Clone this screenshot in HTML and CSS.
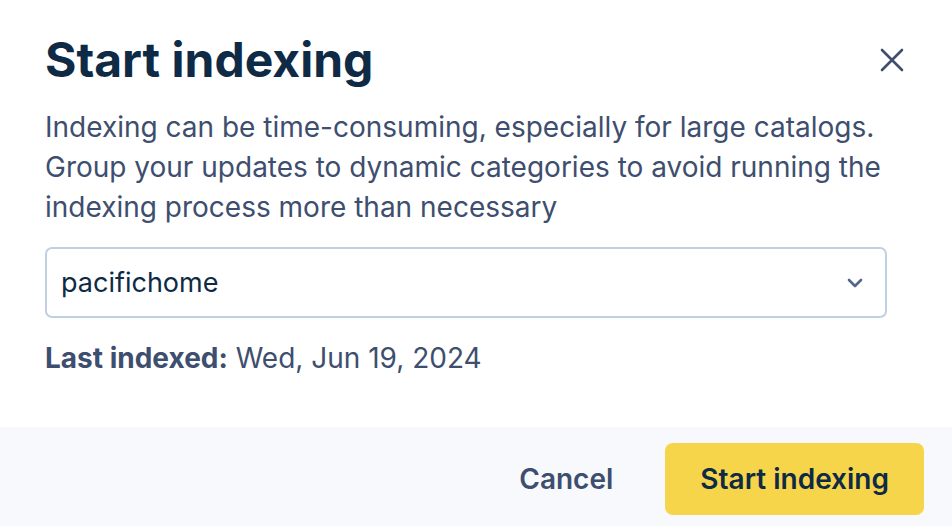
FILE: index.html
```html
<!DOCTYPE html>
<html lang="en">
<head>
    <meta charset="UTF-8">
    <meta name="viewport" content="width=device-width, initial-scale=1.0">
    <title>Start indexing</title>
    <link rel="stylesheet" href="styles.css">
</head>
<body>
    <div class="modal">
        <div class="modal-main">
            <div class="modal-header">
                <h1>Start indexing</h1>
                <button class="close-btn" aria-label="Close">
                    <svg width="24" height="24" viewBox="0 0 24 24" fill="none" stroke="#3e4e6e" stroke-width="2.6" stroke-linecap="round">
                        <path d="M2 2 L22 22 M22 2 L2 22"/>
                    </svg>
                </button>
            </div>

            <div class="modal-content">
                <p class="description">Indexing can be time-consuming, especially for large catalogs. Group your updates to dynamic categories to avoid running the indexing process more than necessary</p>

                <div class="select-box">
                    <span>pacifichome</span>
                    <svg width="16" height="10" viewBox="0 0 16 10" fill="none" stroke="#56668a" stroke-width="2.6" stroke-linecap="round" stroke-linejoin="round">
                        <path d="M2 2 L8 8 L14 2"/>
                    </svg>
                </div>

                <p class="last-indexed"><strong>Last indexed:</strong> Wed, Jun 19, 2024</p>
            </div>
        </div>

        <div class="modal-footer">
            <button class="btn-cancel">Cancel</button>
            <button class="btn-primary">Start indexing</button>
        </div>
    </div>
</body>
</html>
```

FILE: styles.css
```css
body {
    margin: 0;
    padding: 0;
    font-family: Inter, "Noto Sans", sans-serif;
    background-color: #fff;
    color: #3e4e6e;
}
.modal {
    width: 952px;
    height: 526px;
    display: flex;
    flex-direction: column;
    overflow: hidden;
}
.modal-main {
    padding: 0 0 49px 45px;
}
.modal-header {
    display: flex;
    justify-content: space-between;
    align-items: center;
    padding: 30px 48px 0 0;
}
.modal-header h1 {
    margin: 0;
    font-size: 48px;
    line-height: 60px;
    font-weight: 700;
    color: #0e2a45;
}
.close-btn {
    background: none;
    border: none;
    padding: 0;
    width: 24px;
    height: 24px;
    display: flex;
    cursor: pointer;
}
.modal-content {
    width: 842px;
}
.description {
    margin: 17px 0 0 0;
    font-size: 28px;
    line-height: 40px;
}
.select-box {
    margin-top: 20px;
    height: 71px;
    box-sizing: border-box;
    border: 2px solid #c1cfe3;
    border-radius: 7px;
    display: flex;
    align-items: center;
    justify-content: space-between;
    padding: 0 22px 0 14px;
    font-size: 27px;
    color: #0e2a45;
}
.last-indexed {
    margin: 20px 0 0 0;
    font-size: 28px;
    line-height: 40px;
}
.last-indexed strong {
    font-weight: 700;
}
.modal-footer {
    flex: 1;
    background-color: #f7f9fc;
    display: flex;
    justify-content: flex-end;
    align-items: flex-start;
    gap: 18px;
    padding: 16px 28px 0 0;
}
.modal-footer button {
    font-family: inherit;
    font-size: 28px;
    font-weight: 600;
    border: none;
    height: 72px;
    cursor: pointer;
}
.btn-cancel {
    background: none;
    color: #3e4e6e;
    padding: 0 34px;
}
.btn-primary {
    background-color: #f7d54a;
    color: #0e2a45;
    border-radius: 8px;
    padding: 0 35px;
}
```
